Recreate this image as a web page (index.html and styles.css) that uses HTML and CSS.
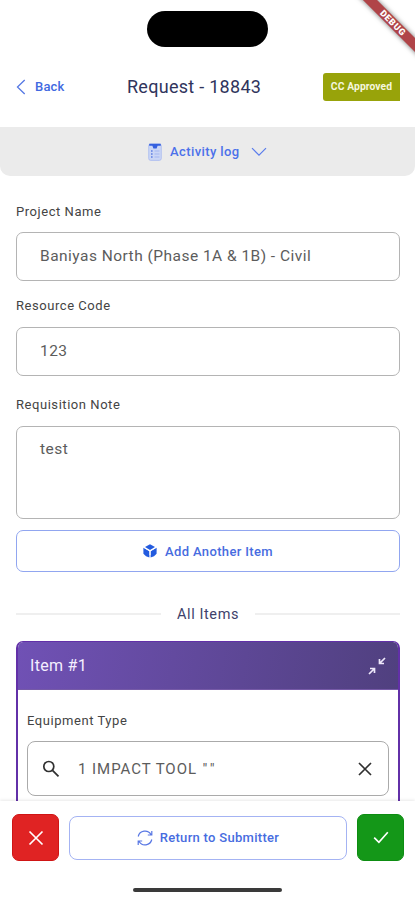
FILE: index.html
```html
<!DOCTYPE html>
<html lang="en">
<head>
<meta charset="utf-8">
<title>Request - 18843</title>
<link rel="stylesheet" href="styles.css">
</head>
<body>
<div class="screen">
  <div class="debug"><span>DEBUG</span></div>
  <div class="status"><div class="island"></div></div>
  <header class="header">
    <a class="back">
      <svg width="10" height="16" viewBox="0 0 10 16"><path d="M8.7 1 1.5 8l7.2 7"/></svg>
      <span>Back</span>
    </a>
    <h1>Request - 18843</h1>
    <span class="badge">CC Approved</span>
  </header>
  <div class="activity">
    <svg class="log" width="14" height="18" viewBox="0 0 14 18">
      <rect x=".7" y="1" width="12.6" height="16.4" rx="2" fill="#cbd6f6" stroke="#a9baf0" stroke-width=".8"/>
      <path d="M1.2.8h11.6v2H9.6L8.6 5.500H5.4l-1-2.700H1.200z" fill="#3560df"/>
      <path d="M3 8h1.600M3 11h1.600M3 14h1.600" stroke="#5f7fe3" stroke-width="1.500"/>
      <path d="M6.500 8h5M6.500 11h5M6.500 14h5" stroke="#a3b6f1"/>
    </svg>
    <span>Activity log</span>
    <svg class="chev" width="16" height="10" viewBox="0 0 16 10"><path d="m1 1.200 7 7 7-7"/></svg>
  </div>
  <main class="content">
    <label class="label">Project Name</label>
    <div class="field project">Baniyas North (Phase 1A &amp; 1B) - Civil</div>
    <label class="label resource-label">Resource Code</label>
    <div class="field">123</div>
    <label class="label note-label">Requisition Note</label>
    <div class="field note">test</div>
    <button class="add">
      <svg width="14" height="14" viewBox="0 0 14 14">
        <path d="M7 .2 12 3 7 5.900 2 3z"/><path d="M.4 3.800 6.400 7.200v6.300L3 12.200.4 9.800z"/><path d="M13.600 3.800 7.600 7.200v6.300l3.400-1.300 2.600-2.400z"/>
        <path class="cut" d="M1.500 3.800 7 7l5.500-3.200M7 7v4"/>
      </svg>
      <span>Add Another Item</span>
    </button>
    <div class="divider"><i></i><span>All Items</span><i></i></div>
    <section class="item">
      <div class="item-head">
        <h2>Item #1</h2>
        <svg width="18" height="18" viewBox="0 0 18 18"><path d="M17 1l-5 5M11.500 2v4.500H16M1 17l5-5M2 11.500h4.500V16"/></svg>
      </div>
      <div class="item-body">
        <label class="label">Equipment Type</label>
        <div class="search">
          <svg width="18" height="18" viewBox="0 0 18 18"><circle cx="6.800" cy="6.500" r="5"/><path d="m10.500 10.300 6 6"/></svg>
          <span class="value">1 IMPACT TOOL <span class="quotes">""</span></span>
          <svg class="clear" width="14" height="14" viewBox="0 0 14 14"><path d="m1 1 12 12M13 1 1 13"/></svg>
        </div>
      </div>
    </section>
  </main>
  <footer class="footer">
    <div class="actions">
      <button class="square reject"><svg width="16" height="16" viewBox="0 0 16 16"><path d="m1.500 1.500 13 13M14.500 1.500l-13 13"/></svg></button>
      <button class="return">
        <svg width="16" height="16" viewBox="0 0 16 16"><path d="M1.200 6.500A7 7 0 0 1 14 4.500M14.800 1v4h-4M14.800 9.500A7 7 0 0 1 2 11.500M1.200 15v-4h4"/></svg>
        <span>Return to Submitter</span>
      </button>
      <button class="square approve"><svg width="16" height="13" viewBox="0 0 16 13"><path d="m1.200 6.700 4.700 4.600L14.800 1.300"/></svg></button>
    </div>
    <div class="home"></div>
  </footer>
</div>
</body>
</html>
```
FILE: styles.css
```css
* { box-sizing: border-box; }
body { margin: 0; background: #fff; font-family: Roboto, "Liberation Sans", sans-serif; }
h1, h2 { margin: 0; font-weight: 400; }
button { font: inherit; padding: 0; margin: 0; background: none; }
svg { display: block; flex: none; fill: none; }
.screen { position: relative; width: 415px; height: 900px; overflow: hidden; display: flex; flex-direction: column; }
.status { height: 58px; padding-top: 11px; flex: none; }
.island { width: 121px; height: 36px; margin-left: 147px; border-radius: 18px; background: #000; }
.debug { position: absolute; top: 18px; left: 347px; width: 92px; height: 10px; transform: rotate(45deg); background: #b04448; box-shadow: 0 0 5px rgba(0,0,0,.55); text-align: center; color: #fff; font-size: 9px; line-height: 10px; font-weight: 900; letter-spacing: .7px; }
.header { height: 69px; flex: none; padding: 0 15px 12px 16px; display: grid; grid-template-columns: 111px 1fr 77px; align-items: center; }
.back { display: flex; align-items: center; gap: 9px; color: #4169e1; font-size: 13px; font-weight: 500; letter-spacing: .2px; }
.back svg { stroke: #5578e4; stroke-width: 1.3; }
.header h1 { font-size: 18px; color: #30345c; letter-spacing: .28px; white-space: nowrap; }
.badge { height: 28px; border-radius: 3px 0 0 3px; background: #98a30a; color: #f4f6dd; font-size: 10.3px; font-weight: 700; letter-spacing: .1px; line-height: 28px; text-align: center; white-space: nowrap; }
.activity { height: 49px; flex: none; background: #ebebeb; border-radius: 0 0 10px 10px; display: flex; align-items: center; padding-left: 148px; color: #4b71ea; font-size: 13px; font-weight: 500; letter-spacing: .4px; }
.activity span { margin: 0 11px 0 8px; }
.chev { stroke: #5a7cec; stroke-width: 1.2; }
.content { flex: 1; min-height: 0; overflow: hidden; padding: 28px 15px 0 16px; }
.label { display: block; height: 16px; line-height: 16px; font-size: 13px; color: #444; letter-spacing: .55px; }
.field { height: 49px; margin-top: 13px; border: 1px solid #b4b4b4; border-radius: 7px; padding-left: 23px; line-height: 46px; font-size: 15.5px; letter-spacing: .47px; color: #5c5c5c; white-space: nowrap; }
.field.project { margin-top: 12px; }
.resource-label { margin-top: 17px; }
.note-label { margin-top: 21px; }
.field.note { height: 93px; line-height: 45px; }
.add { width: 100%; height: 42px; margin-top: 11px; border: 1px solid #91a6f0; border-radius: 7px; display: flex; align-items: center; justify-content: center; gap: 8px; color: #476ce0; font-size: 13px; font-weight: 500; letter-spacing: .35px; }
.add svg { fill: #235bdf; }
.add .cut { fill: none; stroke: #fff; stroke-width: 1; }
.divider { display: flex; align-items: center; gap: 16px; margin-top: 33px; height: 18px; font-size: 14.5px; letter-spacing: .6px; color: #3e426b; }
.divider i { flex: 1; height: 2px; background: #efefef; }
.item { height: 240px; margin-top: 18px; border: 2px solid #6230a8; border-top-width: 1px; border-radius: 7px; overflow: hidden; }
.item-head { height: 48px; padding: 0 12px; display: flex; align-items: center; justify-content: space-between; background: linear-gradient(100deg, #7051b5, #50407f); border-bottom: 1px solid #765aa7; }
.item-head h2 { color: #f4efff; font-size: 16px; letter-spacing: .3px; }
.item-head svg { stroke: #eee8fa; stroke-width: 1.7; }
.item-body { padding: 23px 9px 0 9px; }
.search { height: 55px; margin-top: 12px; border: 1px solid #aaa; border-radius: 8px; display: flex; align-items: center; padding: 0 16px 0 14px; font-size: 15px; letter-spacing: .95px; color: #5c5c5c; }
.value { margin-left: 18px; flex: 1; }
.quotes { letter-spacing: 3px; margin-left: 1px; }
.search svg { stroke: #303030; stroke-width: 1.7; }
.footer { height: 99px; flex: none; background: #fff; box-shadow: 0 -1px 3px rgba(0,0,0,.09); padding-top: 13px; position: relative; }
.actions { display: flex; align-items: center; justify-content: space-between; padding: 0 11px 0 12px; height: 47px; }
.square { width: 47px; height: 47px; border-radius: 7px; border: 1px solid; display: flex; align-items: center; justify-content: center; }
.reject { background: #e02323; border-color: #cf1515; }
.approve { background: #149718; border-color: #0d8d12; }
.square svg { stroke: #fff; stroke-width: 1.7; }
.return { width: 278px; height: 44px; border: 1px solid #a4b3f3; border-radius: 8px; display: flex; align-items: center; justify-content: center; gap: 7px; color: #476ce0; font-size: 13px; font-weight: 500; letter-spacing: .3px; }
.return svg { stroke: #5877e4; stroke-width: 1.2; }
.home { width: 149px; height: 4px; margin: 27px 0 0 133px; border-radius: 2px; background: #3a3a3a; }
```
